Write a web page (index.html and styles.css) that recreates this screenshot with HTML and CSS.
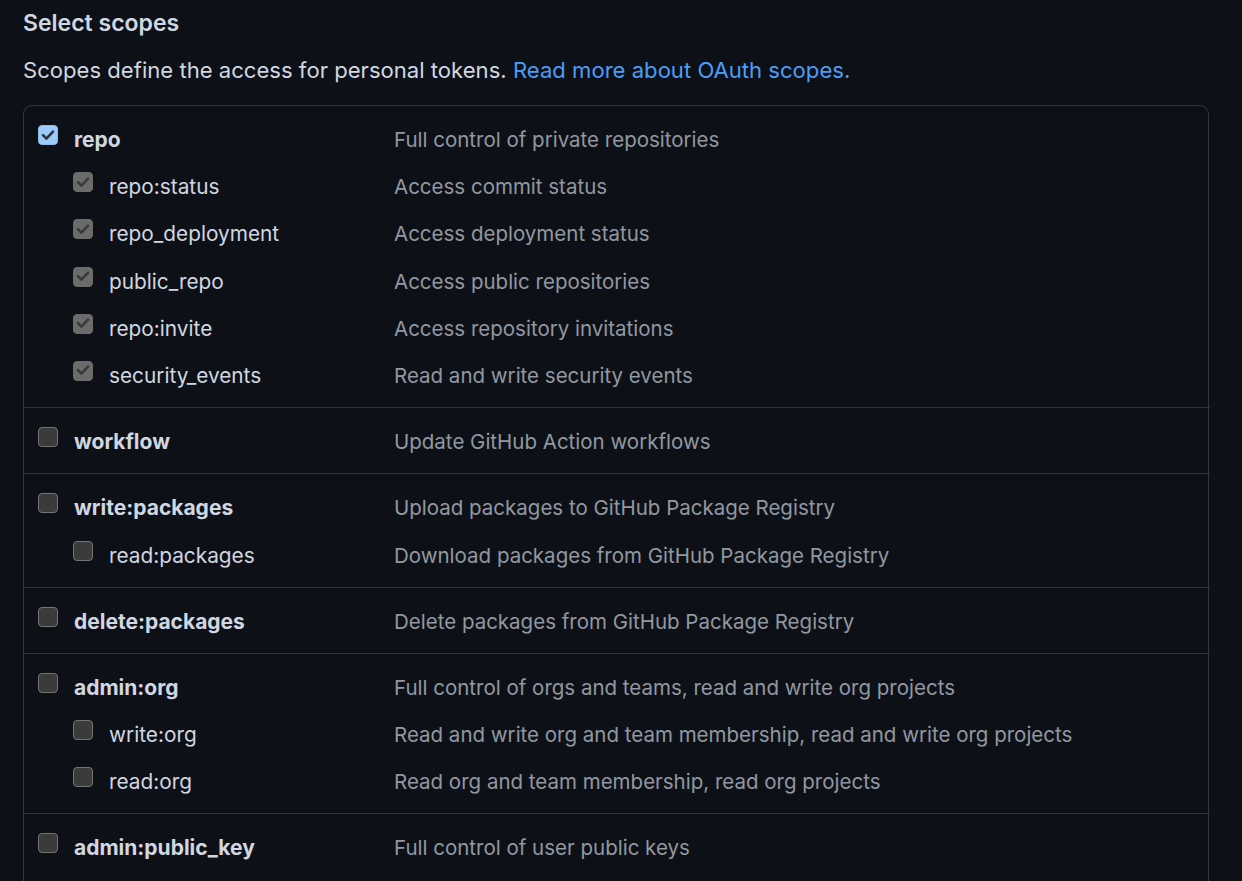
FILE: index.html
```html
<!DOCTYPE html>
<html lang="en">
<head>
<meta charset="utf-8">
<title>Select scopes</title>
<link rel="stylesheet" href="styles.css">
</head>
<body>
<main class="page">
  <h2 class="title">Select scopes</h2>
  <p class="intro">Scopes define the access for personal tokens. <a class="link" href="#">Read more about OAuth scopes.</a></p>

  <div class="scopes">
    <div class="group">
      <div class="row parent">
        <div class="name"><span class="cb checked"><svg viewBox="0 0 20 20"><path d="M5 10.2 L8.4 13.6 L15 6.6"/></svg></span><span class="label">repo</span></div>
        <div class="desc">Full control of private repositories</div>
      </div>
      <div class="row child">
        <div class="name"><span class="cb disabled"><svg viewBox="0 0 20 20"><path d="M5 10.2 L8.4 13.6 L15 6.6"/></svg></span><span class="label">repo:status</span></div>
        <div class="desc">Access commit status</div>
      </div>
      <div class="row child">
        <div class="name"><span class="cb disabled"><svg viewBox="0 0 20 20"><path d="M5 10.2 L8.4 13.6 L15 6.6"/></svg></span><span class="label">repo_deployment</span></div>
        <div class="desc">Access deployment status</div>
      </div>
      <div class="row child">
        <div class="name"><span class="cb disabled"><svg viewBox="0 0 20 20"><path d="M5 10.2 L8.4 13.6 L15 6.6"/></svg></span><span class="label">public_repo</span></div>
        <div class="desc">Access public repositories</div>
      </div>
      <div class="row child">
        <div class="name"><span class="cb disabled"><svg viewBox="0 0 20 20"><path d="M5 10.2 L8.4 13.6 L15 6.6"/></svg></span><span class="label">repo:invite</span></div>
        <div class="desc">Access repository invitations</div>
      </div>
      <div class="row child">
        <div class="name"><span class="cb disabled"><svg viewBox="0 0 20 20"><path d="M5 10.2 L8.4 13.6 L15 6.6"/></svg></span><span class="label">security_events</span></div>
        <div class="desc">Read and write security events</div>
      </div>
    </div>

    <div class="group">
      <div class="row parent">
        <div class="name"><span class="cb"></span><span class="label">workflow</span></div>
        <div class="desc">Update GitHub Action workflows</div>
      </div>
    </div>

    <div class="group">
      <div class="row parent">
        <div class="name"><span class="cb"></span><span class="label">write:packages</span></div>
        <div class="desc">Upload packages to GitHub Package Registry</div>
      </div>
      <div class="row child">
        <div class="name"><span class="cb"></span><span class="label">read:packages</span></div>
        <div class="desc">Download packages from GitHub Package Registry</div>
      </div>
    </div>

    <div class="group">
      <div class="row parent">
        <div class="name"><span class="cb"></span><span class="label">delete:packages</span></div>
        <div class="desc">Delete packages from GitHub Package Registry</div>
      </div>
    </div>

    <div class="group">
      <div class="row parent">
        <div class="name"><span class="cb"></span><span class="label">admin:org</span></div>
        <div class="desc">Full control of orgs and teams, read and write org projects</div>
      </div>
      <div class="row child">
        <div class="name"><span class="cb"></span><span class="label">write:org</span></div>
        <div class="desc">Read and write org and team membership, read and write org projects</div>
      </div>
      <div class="row child">
        <div class="name"><span class="cb"></span><span class="label">read:org</span></div>
        <div class="desc">Read org and team membership, read org projects</div>
      </div>
    </div>

    <div class="group">
      <div class="row parent">
        <div class="name"><span class="cb"></span><span class="label">admin:public_key</span></div>
        <div class="desc">Full control of user public keys</div>
      </div>
      <div class="row child">
        <div class="name"><span class="cb"></span><span class="label">write:public_key</span></div>
        <div class="desc">Write user public keys</div>
      </div>
      <div class="row child">
        <div class="name"><span class="cb"></span><span class="label">read:public_key</span></div>
        <div class="desc">Read user public keys</div>
      </div>
    </div>
  </div>
</main>
</body>
</html>
```

FILE: styles.css
```css
html, body {
  margin: 0;
  padding: 0;
  background: #0d1117;
}

body {
  font-family: Inter, "Noto Sans", "Liberation Sans", sans-serif;
  color: #d1d7e0;
  overflow: hidden;
  height: 881px;
}

.page {
  padding: 0 33px 0 23px;
}

.title {
  margin: 0;
  padding-top: 7px;
  font-size: 23px;
  line-height: 33px;
  font-weight: 600;
  color: #d1d7e0;
}

.intro {
  margin: 15px 0 0;
  font-size: 22.1px;
  line-height: 31px;
  color: #d1d7e0;
}

.link {
  color: #4c9df7;
  text-decoration: none;
}

.scopes {
  margin-top: 19px;
  border: 1px solid #30363d;
  border-radius: 9px;
  width: 1184px;
}

.group {
  padding: 9px 2px 9px 1px;
  border-top: 1px solid #30363d;
  margin: 0 -2px 0 -1px;
}

.group:first-child {
  border-top: 0;
  margin: 0;
  padding-left: 0;
  padding-right: 0;
}

.row {
  display: flex;
  height: 47.2px;
  padding-left: 14px;
  font-size: 20.5px;
  line-height: 31px;
}

.name {
  width: 356px;
  flex: none;
  display: flex;
  align-items: flex-start;
  gap: 16px;
  padding-top: 8px;
  box-sizing: border-box;
}

.child .name {
  padding-left: 35px;
}

.label {
  color: #d1d7e0;
  font-size: 20.8px;
  padding-top: 1px;
}

.parent .label {
  font-size: 21px;
  font-weight: 700;
}

.desc {
  padding-top: 9px;
  color: #9198a1;
}

.cb {
  flex: none;
  width: 20px;
  height: 20px;
  margin-top: 2px;
  box-sizing: border-box;
  border: 1.5px solid #747474;
  border-radius: 4px;
  background: #3b3b3b;
  display: block;
}

.cb svg {
  display: block;
  margin: -1.5px;
  width: 20px;
  height: 20px;
}

.cb svg path {
  fill: none;
  stroke-width: 2.6;
  stroke-linecap: round;
  stroke-linejoin: round;
}

.cb.checked {
  background: #9ccbfb;
  border-color: #8fb9e6;
}

.cb.checked svg path {
  stroke: #2f3338;
}

.cb.disabled {
  background: #6b6b6b;
  border-color: #6b6b6b;
}

.cb.disabled svg path {
  stroke: #3a3a3a;
}
```
